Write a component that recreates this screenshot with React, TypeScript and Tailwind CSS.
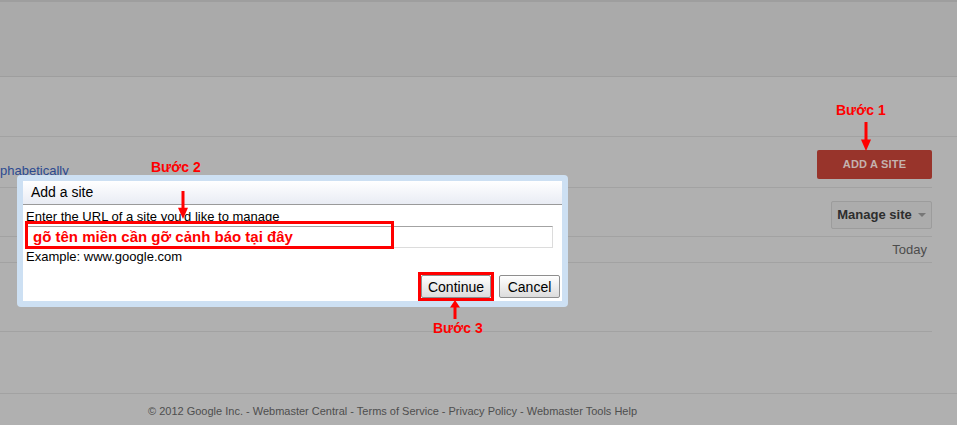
import React from 'react';

// ── Small red annotation arrow ───────────────────────────
function Arrow({ dir, className }: { dir: 'down' | 'up'; className: string }) {
  return (
    <svg className={className} viewBox="0 0 10 30" preserveAspectRatio="none" fill="#ff0000">
      {dir === 'down' ? (
        <>
          <rect x="3.5" y="0" width="3" height="20" />
          <polygon points="0,18 10,18 5,30" />
        </>
      ) : (
        <>
          <rect x="3.5" y="10" width="3" height="20" />
          <polygon points="0,12 10,12 5,0" />
        </>
      )}
    </svg>
  );
}

function DialogButton({ label, className }: { label: string; className: string }) {
  return (
    <button className={`h-[23px] border border-[#8e8e8e] rounded-[2px] bg-gradient-to-b from-white to-[#dcdcdc] text-[14px] text-black leading-none ${className}`}>
      {label}
    </button>
  );
}

// ── Main ─────────────────────────────────────────────────
export default function App() {
  return (
    <div className="relative w-[957px] h-[425px] overflow-hidden bg-[#b0b0b0] text-[13px] text-[#333]" style={{ fontFamily: "'Liberation Sans', Arial, sans-serif" }}>
      {/* header band */}
      <div className="h-[77px] bg-[#aaaaaa] border-t-2 border-b border-[#9e9e9e]" />
      <div className="h-[60px] border-b border-[#a2a2a2]" />

      {/* sort + add site row */}
      <div className="flex justify-between items-start h-[50px] w-[932px]">
        <a className="mt-[24px] text-[13px] text-[#2c4a90]">phabetically</a>
        <button className="mt-[13px] w-[115px] h-[29px] rounded-[2px] bg-[#98342b] text-[11px] font-bold text-[#c4b2ae] tracking-[0.2px]">
          ADD A SITE
        </button>
      </div>
      <div className="w-[932px] border-b border-[#a2a2a2]" />

      {/* manage site row */}
      <div className="flex justify-end items-start h-[48px] w-[932px]">
        <button className="mt-[13px] w-[101px] h-[28px] rounded-[2px] border border-[#9c9c9c] bg-[#acacac] flex items-center justify-center gap-[6px] text-[13px] font-bold text-[#2e2e2e]">
          Manage site
          <span className="w-0 h-0 border-l-[4px] border-r-[4px] border-t-[4px] border-l-transparent border-r-transparent border-t-[#777]" />
        </button>
      </div>
      <div className="w-[932px] border-b border-[#a2a2a2]" />

      <div className="flex justify-end items-center h-[25px] w-[932px] pr-[5px] text-[#4c4c4c]">Today</div>
      <div className="w-[932px] border-b border-[#a2a2a2]" />
      <div className="h-[69px] w-[932px] border-b border-[#a2a2a2]" />
      <div className="h-[62px] border-b border-[#a2a2a2]" />

      {/* footer */}
      <div className="pl-[148px] pt-[9px] text-[11px] text-[#4e4e4e]">
        © 2012 Google Inc. - Webmaster Central - Terms of Service - Privacy Policy - Webmaster Tools Help
      </div>

      {/* ── Dialog ── */}
      <div className="absolute left-[17px] top-[175px] w-[551px] h-[132px] rounded-[4px] bg-[#cde0f3] p-[6px]">
        <div className="h-full bg-white flex flex-col">
          <div className="h-[24px] flex items-center px-[8px] bg-gradient-to-b from-white to-[#e9ecf4] border-b border-[#9a9a9a] text-[14px] text-black">
            Add a site
          </div>
          <div className="flex flex-col pl-[3px] pr-[9px] pt-[4px] text-[13px] text-black">
            <div className="h-[16px] leading-[16px]">Enter the URL of a site you'd like to manage</div>
            <div className="mt-[1px] h-[22px] border border-[#dcdcdc] border-t-[#a3a3a3] flex items-center pl-[6px] text-[15px] font-bold text-[#ff0000]">
              gõ tên miền cần gỡ cảnh báo tại đây
            </div>
            <div className="mt-[1px] h-[16px] leading-[16px]">Example: www.google.com</div>
          </div>
          <div className="flex justify-end gap-[8px] pr-[2px] mt-[10px]">
            <DialogButton label="Continue" className="w-[70px]" />
            <DialogButton label="Cancel" className="w-[61px]" />
          </div>
        </div>
      </div>

      {/* ── Annotations ── */}
      <div className="absolute left-[836px] top-[100px] text-[14px] font-bold text-[#ff0000]">Bước 1</div>
      <Arrow dir="down" className="absolute left-[861px] top-[122px] w-[10px] h-[29px]" />

      <div className="absolute left-[151px] top-[157px] text-[14px] font-bold text-[#ff0000]">Bước 2</div>
      <Arrow dir="down" className="absolute left-[178px] top-[191px] w-[10px] h-[28px]" />
      <div className="absolute left-[25px] top-[221px] w-[369px] h-[28px] border-[3px] border-[#ff0000]" />

      <div className="absolute left-[418px] top-[272px] w-[76px] h-[29px] border-[3px] border-[#ff0000]" />
      <Arrow dir="up" className="absolute left-[450px] top-[300px] w-[10px] h-[19px]" />
      <div className="absolute left-[433px] top-[318px] text-[14px] font-bold text-[#ff0000]">Bước 3</div>
    </div>
  );
}
